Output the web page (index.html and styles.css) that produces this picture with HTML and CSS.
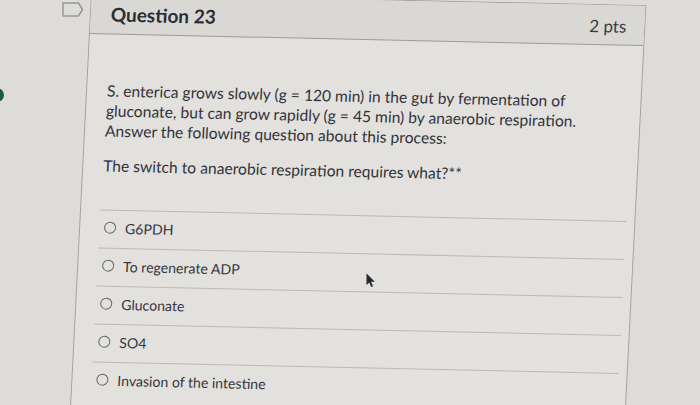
FILE: index.html
```html
<!DOCTYPE html>
<html lang="en">
<head>
<meta charset="utf-8">
<title>Question 23</title>
<link rel="stylesheet" href="styles.css">
</head>
<body>
<div class="nav-dot"></div>
<div class="page">
  <div class="gutter">
    <svg class="flag" width="22" height="16" viewBox="0 0 22 16" aria-hidden="true">
      <path d="M1 1 H16.5 L20.5 7.5 L16.5 14 H1 Z" fill="none" stroke="#96969e" stroke-width="1.5" stroke-linejoin="round"/>
    </svg>
  </div>
  <div class="question">
    <div class="q-header">
      <h3 class="q-title">Question 23</h3>
      <span class="q-points">2 pts</span>
    </div>
    <div class="q-body">
      <p class="q-text">S. enterica grows slowly (g = 120 min) in the gut by fermentation of gluconate, but can grow rapidly (g = 45 min) by anaerobic respiration.<br>Answer the following question about this process:</p>
      <p class="q-text">The switch to anaerobic respiration requires what?**</p>
      <ul class="answers">
        <li class="answer"><span class="radio"></span><span class="label">G6PDH</span></li>
        <li class="answer"><span class="radio"></span><span class="label">To regenerate ADP</span></li>
        <li class="answer"><span class="radio"></span><span class="label">Gluconate</span></li>
        <li class="answer"><span class="radio"></span><span class="label">SO4</span></li>
        <li class="answer"><span class="radio"></span><span class="label">Invasion of the intestine</span></li>
      </ul>
    </div>
  </div>
</div>
<svg class="cursor" width="10" height="15" viewBox="0 0 10 15" aria-hidden="true">
  <path d="M0.5 0.5 L0.5 12 L3.2 9.4 L5.3 14 L7 13.2 L5 8.8 L8.8 8.8 Z" fill="#26262f"/>
</svg>
</body>
</html>
```
FILE: styles.css
```css
html, body {
  margin: 0;
  padding: 0;
}
body {
  width: 700px;
  height: 405px;
  overflow: hidden;
  background: #dedcd8;
  font-family: Lato, "Open Sans", "Liberation Sans", sans-serif;
  color: #33333a;
  position: relative;
}
.nav-dot {
  position: absolute;
  left: -10px;
  top: 88px;
  width: 14px;
  height: 14px;
  border-radius: 50%;
  background: #1f5a3a;
}
.page {
  display: flex;
  align-items: flex-start;
}
.gutter {
  width: 91px;
  flex: none;
  padding: 2px 0 0 62px;
  box-sizing: border-box;
}
.flag {
  display: block;
}
.question {
  flex: none;
  width: 556px;
  height: 440px;
  margin-top: -7px;
  box-sizing: border-box;
  border: 1px solid #a4a3a0;
  background: #e2e1dd;
  transform-origin: 0 0;
  transform: skewX(-2.9deg) skewY(1.25deg);
}
.q-header {
  height: 39px;
  border-bottom: 1px solid #9e9d9a;
  background: #d9d8d4;
  display: flex;
  align-items: center;
  justify-content: space-between;
  padding: 0 18px 0 20px;
}
.q-title {
  margin: 0;
  font-size: 19px;
  font-weight: 700;
  color: #2c2c34;
}
.q-points {
  font-size: 17px;
  color: #3b3b43;
  padding-top: 2px;
}
.q-body {
  padding: 46px 8px 0 20px;
}
.q-text {
  margin: 0 0 15px;
  max-width: 520px;
  font-size: 15.65px;
  line-height: 20px;
}
.answers {
  list-style: none;
  margin: 34px 0 0 -1px;
  padding: 0;
}
.answer {
  display: flex;
  align-items: center;
  height: 38px;
  box-sizing: border-box;
  border-top: 1px solid #bab9b5;
  padding: 0 0 3px 5px;
  font-size: 14.1px;
  color: #35353c;
}
.radio {
  width: 12px;
  height: 12px;
  box-sizing: border-box;
  border: 1px solid #64646a;
  border-radius: 50%;
  margin-right: 9px;
  flex: none;
}
.cursor {
  position: absolute;
  left: 366px;
  top: 273px;
}
```
